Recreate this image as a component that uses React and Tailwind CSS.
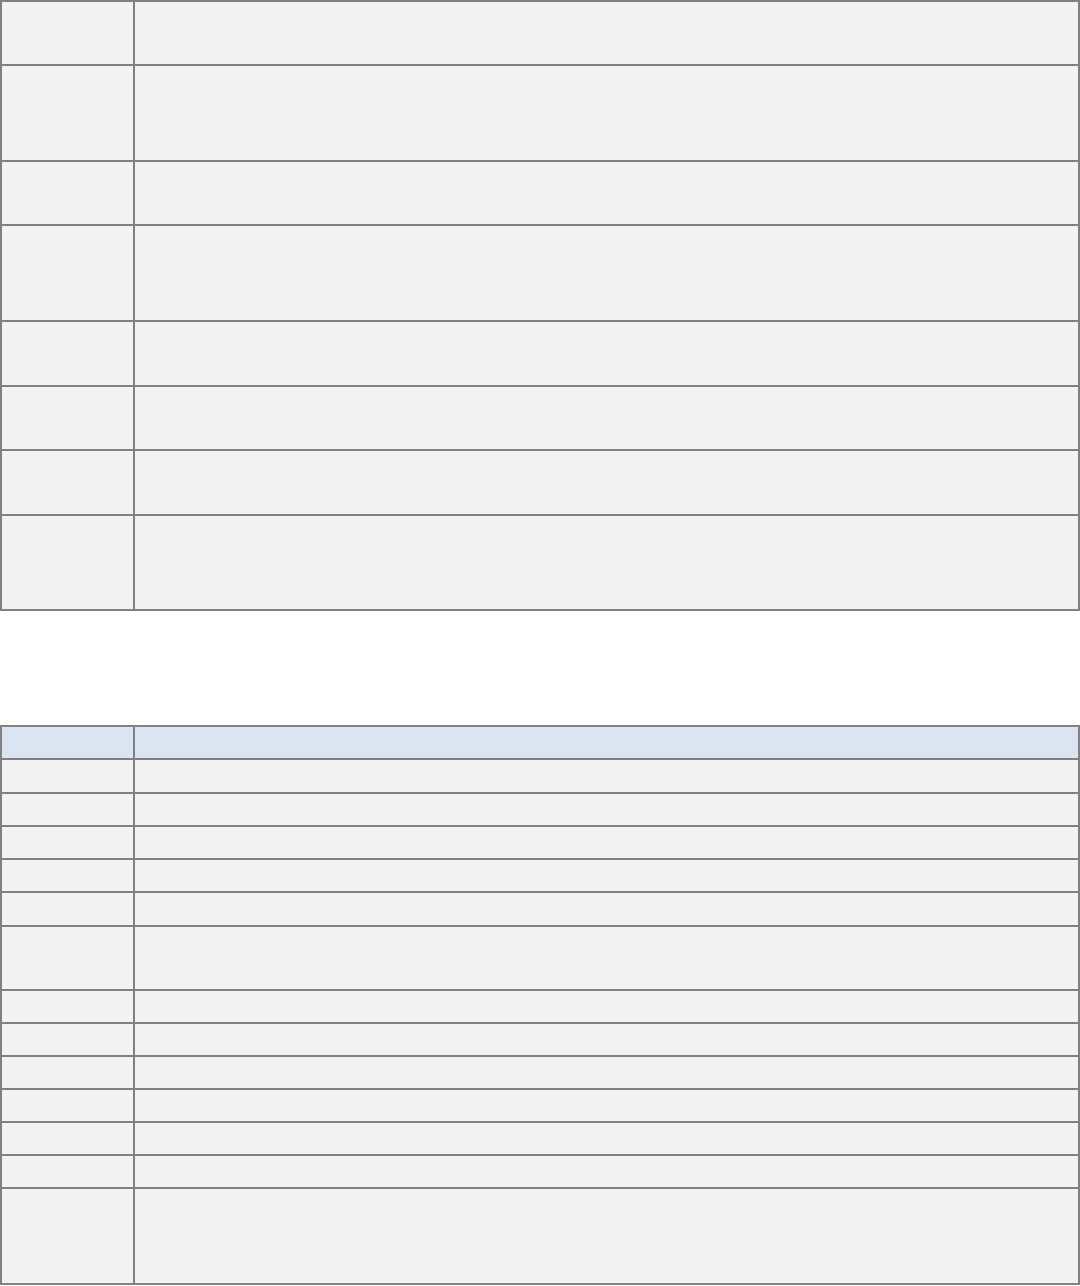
export default function App() {
  const topRows = [62, 94, 62, 94, 63, 62, 63, 93];
  const bottomRows = [32, 31, 31, 31, 32, 62, 31, 31, 31, 31, 31, 31, 94];

  return (
    <div className="w-[1080px] bg-white font-['Liberation_Sans',sans-serif]">
      {/* First table */}
      <div className="border-2 border-[#808080] bg-[#f2f2f2]">
        {topRows.map((h, i) => (
          <div
            key={i}
            className={`flex ${i > 0 ? 'border-t-2 border-[#808080]' : ''}`}
            style={{ height: h + (i > 0 ? 2 : 0) }}
          >
            <div className="w-[133px] shrink-0 border-r-2 border-[#808080]" />
            <div className="flex-1" />
          </div>
        ))}
      </div>

      {/* Second table */}
      <div className="mt-[114px] border-2 border-[#808080] bg-[#f2f2f2]">
        <div className="flex h-[31px] bg-[#dbe5f1]">
          <div className="w-[133px] shrink-0 border-r-2 border-[#808080]" />
          <div className="flex-1" />
        </div>
        {bottomRows.map((h, i) => (
          <div
            key={i}
            className="flex border-t-2 border-[#808080]"
            style={{ height: h + 2 }}
          >
            <div className="w-[133px] shrink-0 border-r-2 border-[#808080]" />
            <div className="flex-1" />
          </div>
        ))}
      </div>
    </div>
  );
}
